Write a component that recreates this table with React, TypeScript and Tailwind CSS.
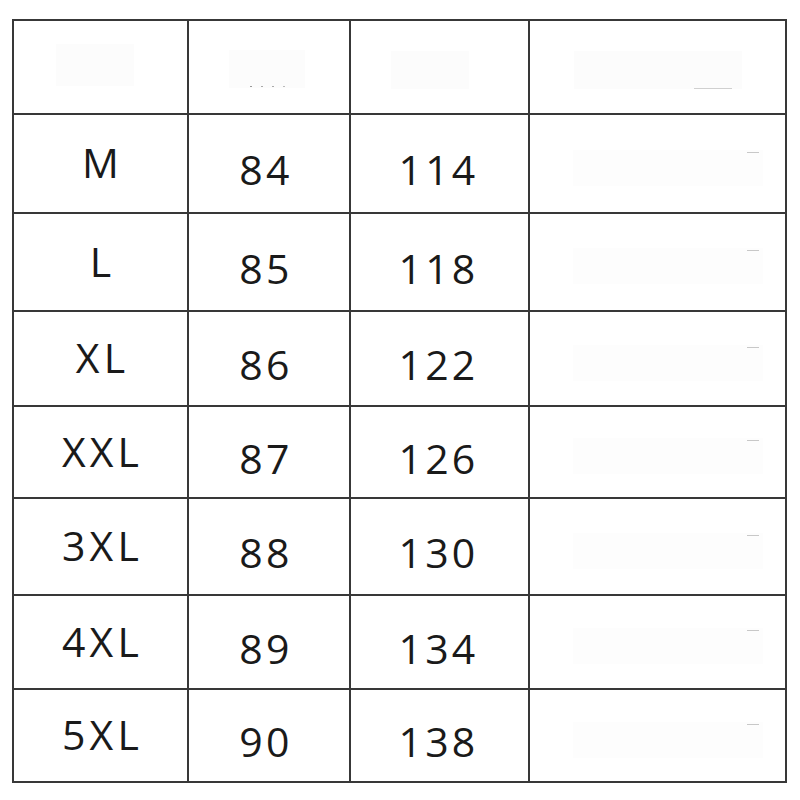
import React from "react";

const rows: { size: string; a: string; b: string; h: number }[] = [
  { size: "M", a: "84", b: "114", h: 99 },
  { size: "L", a: "85", b: "118", h: 98 },
  { size: "XL", a: "86", b: "122", h: 95 },
  { size: "XXL", a: "87", b: "126", h: 92 },
  { size: "3XL", a: "88", b: "130", h: 97 },
  { size: "4XL", a: "89", b: "134", h: 94 },
  { size: "5XL", a: "90", b: "138", h: 93 },
];

const font = { fontFamily: '"Open Sans", "Noto Sans", sans-serif' };

export default function App() {
  return (
    <div className="w-[800px] h-[800px] bg-white pt-[19px] pl-[12px]" style={font}>
      <div className="w-[775px] border-l-2 border-t-2 border-[#383838] flex flex-col">
        {/* header row */}
        <div className="flex h-[94px]">
          <div className="w-[175px] border-r-2 border-b-2 border-[#383838] flex items-center justify-center">
            <div className="w-[78px] h-[42px] bg-[#fcfcfc] -translate-y-[2px] -translate-x-[6px]" />
          </div>
          <div className="w-[162px] border-r-2 border-b-2 border-[#383838] flex items-center justify-center">
            <div className="w-[76px] h-[38px] bg-[#fcfcfc] translate-y-[2px] -translate-x-[2px] flex items-end justify-center gap-[9px] pb-[1px]">
              <span className="w-[2px] h-[1px] bg-[#999]" />
              <span className="w-[2px] h-[1px] bg-[#aaa]" />
              <span className="w-[2px] h-[1px] bg-[#aaa]" />
              <span className="w-[2px] h-[1px] bg-[#bbb]" />
            </div>
          </div>
          <div className="w-[179px] border-r-2 border-b-2 border-[#383838] flex items-center justify-center">
            <div className="w-[78px] h-[38px] bg-[#fcfcfc] translate-y-[3px] -translate-x-[10px]" />
          </div>
          <div className="w-[257px] border-r-2 border-b-2 border-[#383838] flex items-center justify-center">
            <div className="w-[168px] h-[38px] bg-[#fcfcfc] translate-y-[3px] flex items-end">
              <span className="ml-[120px] w-[38px] h-[1px] bg-[#d0d0d0]" />
            </div>
          </div>
        </div>
        {rows.map((r) => (
          <div key={r.size} className="flex" style={{ height: r.h }}>
            <div className="w-[175px] border-r-2 border-b-2 border-[#383838] flex items-center justify-center">
              <span className="text-[41px] leading-none tracking-[0.1em] text-[#1a1a1a] -translate-y-[1px] translate-x-[2px]">
                {r.size}
              </span>
            </div>
            <div className="w-[162px] border-r-2 border-b-2 border-[#383838] flex items-center justify-center">
              <span className="text-[41px] leading-none tracking-[0.08em] text-[#1a1a1a] translate-y-[6px] -translate-x-[3px]">
                {r.a}
              </span>
            </div>
            <div className="w-[179px] border-r-2 border-b-2 border-[#383838] flex items-center justify-center">
              <span className="text-[41px] leading-none tracking-[0.08em] text-[#1a1a1a] translate-y-[6px] -translate-x-[1px]">
                {r.b}
              </span>
            </div>
            <div className="w-[257px] border-r-2 border-b-2 border-[#383838] flex items-center justify-center">
              <div className="w-[190px] h-[36px] bg-[#fdfdfd] translate-y-[4px] translate-x-[10px] flex justify-end">
                <span className="mt-[2px] mr-[4px] w-[12px] h-[1px] bg-[#c8c8c8]" />
              </div>
            </div>
          </div>
        ))}
      </div>
    </div>
  );
}
